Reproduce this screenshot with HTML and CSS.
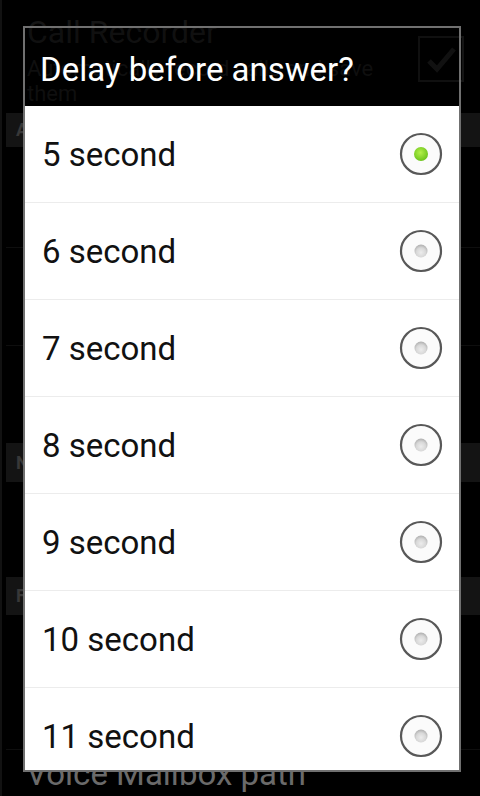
FILE: index.html
```html
<!DOCTYPE html>
<html>
<head>
<meta charset="utf-8">
<link rel="stylesheet" href="styles.css">
</head>
<body>
<div class="screen">
  <div class="bg">
    <div class="bg-row bg-first">
      <div class="bg-texts">
        <div class="bg-title">Call Recorder</div>
        <div class="bg-sub">Automatically record calls and save<br>them</div>
      </div>
      <div class="bg-check">
        <svg width="40" height="40" viewBox="0 0 40 40"><path d="M8 22 L16 30 L33 10" fill="none" stroke="#161616" stroke-width="5"/></svg>
      </div>
    </div>
    <div class="bg-header bg-header-a">Answer</div>
    <div class="bg-row bg-r1"></div>
    <div class="bg-row bg-r2"></div>
    <div class="bg-row bg-r3"></div>
    <div class="bg-header bg-header-n">Notification</div>
    <div class="bg-row bg-r4"></div>
    <div class="bg-header bg-header-f">Files</div>
    <div class="bg-row bg-r5"></div>
    <div class="bg-row bg-last">
      <div class="bg-texts">
        <div class="bg-title bg-title-vm">Voice Mailbox path</div>
        <div class="bg-sub bg-sub-vm">Save voice mail records</div>
      </div>
    </div>
  </div>

  <div class="dialog">
    <div class="dialog-title">Delay before answer?</div>
    <div class="dialog-list">
      <div class="item"><span class="label">5 second</span>
        <svg class="radio" width="44" height="44" viewBox="0 0 44 44">
          <defs>
            <radialGradient id="g1" cx="45%" cy="40%" r="60%"><stop offset="0" stop-color="#b4f04a"/><stop offset="1" stop-color="#6cc41c"/></radialGradient>
          </defs>
          <circle cx="22" cy="22" r="20" fill="#fbfbfb" stroke="#585858" stroke-width="2.2"/>
          <circle cx="22" cy="22" r="7" fill="url(#g1)"/>
        </svg>
      </div>
      <div class="item"><span class="label">6 second</span>
        <svg class="radio" width="44" height="44" viewBox="0 0 44 44">
          <defs>
            <radialGradient id="g0" cx="50%" cy="62%" r="60%"><stop offset="0" stop-color="#ececec"/><stop offset="0.6" stop-color="#d8d8d8"/><stop offset="1" stop-color="#b0b0b0"/></radialGradient>
          </defs>
          <circle cx="22" cy="22" r="20" fill="#fbfbfb" stroke="#585858" stroke-width="2.2"/>
          <circle cx="22" cy="22" r="6.5" fill="url(#g0)"/>
        </svg>
      </div>
      <div class="item"><span class="label">7 second</span>
        <svg class="radio" width="44" height="44" viewBox="0 0 44 44">
          <circle cx="22" cy="22" r="20" fill="#fbfbfb" stroke="#585858" stroke-width="2.2"/>
          <circle cx="22" cy="22" r="6.5" fill="url(#g0)"/>
        </svg>
      </div>
      <div class="item"><span class="label">8 second</span>
        <svg class="radio" width="44" height="44" viewBox="0 0 44 44">
          <circle cx="22" cy="22" r="20" fill="#fbfbfb" stroke="#585858" stroke-width="2.2"/>
          <circle cx="22" cy="22" r="6.5" fill="url(#g0)"/>
        </svg>
      </div>
      <div class="item"><span class="label">9 second</span>
        <svg class="radio" width="44" height="44" viewBox="0 0 44 44">
          <circle cx="22" cy="22" r="20" fill="#fbfbfb" stroke="#585858" stroke-width="2.2"/>
          <circle cx="22" cy="22" r="6.5" fill="url(#g0)"/>
        </svg>
      </div>
      <div class="item"><span class="label">10 second</span>
        <svg class="radio" width="44" height="44" viewBox="0 0 44 44">
          <circle cx="22" cy="22" r="20" fill="#fbfbfb" stroke="#585858" stroke-width="2.2"/>
          <circle cx="22" cy="22" r="6.5" fill="url(#g0)"/>
        </svg>
      </div>
      <div class="item"><span class="label">11 second</span>
        <svg class="radio" width="44" height="44" viewBox="0 0 44 44">
          <circle cx="22" cy="22" r="20" fill="#fbfbfb" stroke="#585858" stroke-width="2.2"/>
          <circle cx="22" cy="22" r="6.5" fill="url(#g0)"/>
        </svg>
      </div>
    </div>
  </div>
</div>
</body>
</html>
```

FILE: styles.css
```css
html, body {
  margin: 0;
  padding: 0;
  background: #000;
}
body {
  font-family: Roboto, "Noto Sans", sans-serif;
}
.screen {
  position: relative;
  width: 480px;
  height: 796px;
  overflow: hidden;
  background: #000;
}
.bg {
  display: flex;
  flex-direction: column;
  padding-left: 4px;
  border-left: 2px solid #121212;
  height: 796px;
  box-sizing: border-box;
}
.bg-row {
  display: flex;
  align-items: flex-start;
  border-bottom: 1px solid #0e0e0e;
  box-sizing: border-box;
  flex-shrink: 0;
}
.bg-first {
  height: 113px;
  padding: 14px 16px 0 21px;
  justify-content: space-between;
  border-bottom: none;
}
.bg-texts {
  display: flex;
  flex-direction: column;
}
.bg-title {
  font-size: 32px;
  color: #151515;
  line-height: 36px;
}
.bg-sub {
  font-size: 22px;
  color: #131313;
  line-height: 25px;
  margin-top: 6px;
}
.bg-check {
  width: 42px;
  height: 42px;
  border: 2px solid #141414;
  margin-top: 22px;
  display: flex;
  align-items: center;
  justify-content: center;
}
.bg-header {
  flex-shrink: 0;
  background: #141414;
  color: #383838;
  font-size: 18px;
  font-weight: bold;
  padding-left: 10px;
}
.bg-header-a {
  height: 34px;
  line-height: 34px;
}
.bg-header-n {
  height: 39px;
  line-height: 39px;
}
.bg-header-f {
  height: 38px;
  line-height: 38px;
}
.bg-r1 { height: 101px; }
.bg-r2 { height: 98px; }
.bg-r3 { height: 97px; border-bottom: none; }
.bg-r4 { height: 95px; border-bottom: none; }
.bg-r5 { height: 135px; }
.bg-last {
  padding: 6px 0 0 20px;
  border-bottom: none;
}
.bg-title-vm {
  color: #6a6a6a;
  font-size: 33px;
}
.bg-sub-vm {
  color: #555;
  font-size: 24px;
}

.dialog {
  position: absolute;
  left: 23px;
  top: 26px;
  width: 438px;
  height: 746px;
  box-sizing: border-box;
  border: 2px solid #707070;
  background: transparent;
  display: flex;
  flex-direction: column;
  overflow: hidden;
}
.dialog-title {
  height: 78px;
  flex-shrink: 0;
  background: rgba(0, 0, 0, 0.2);
  color: #fff;
  font-size: 33px;
  display: flex;
  align-items: center;
  padding: 4px 0 0 15px;
  box-sizing: border-box;
}
.dialog-list {
  display: flex;
  flex-direction: column;
  background: #fff;
  flex: 1;
}
.item {
  height: 97px;
  flex-shrink: 0;
  box-sizing: border-box;
  border-bottom: 1px solid #ececec;
  display: flex;
  align-items: center;
  justify-content: space-between;
  padding: 0 16px 0 17px;
}
.label {
  font-size: 33px;
  color: #111;
}
.radio {
  display: block;
}
```
